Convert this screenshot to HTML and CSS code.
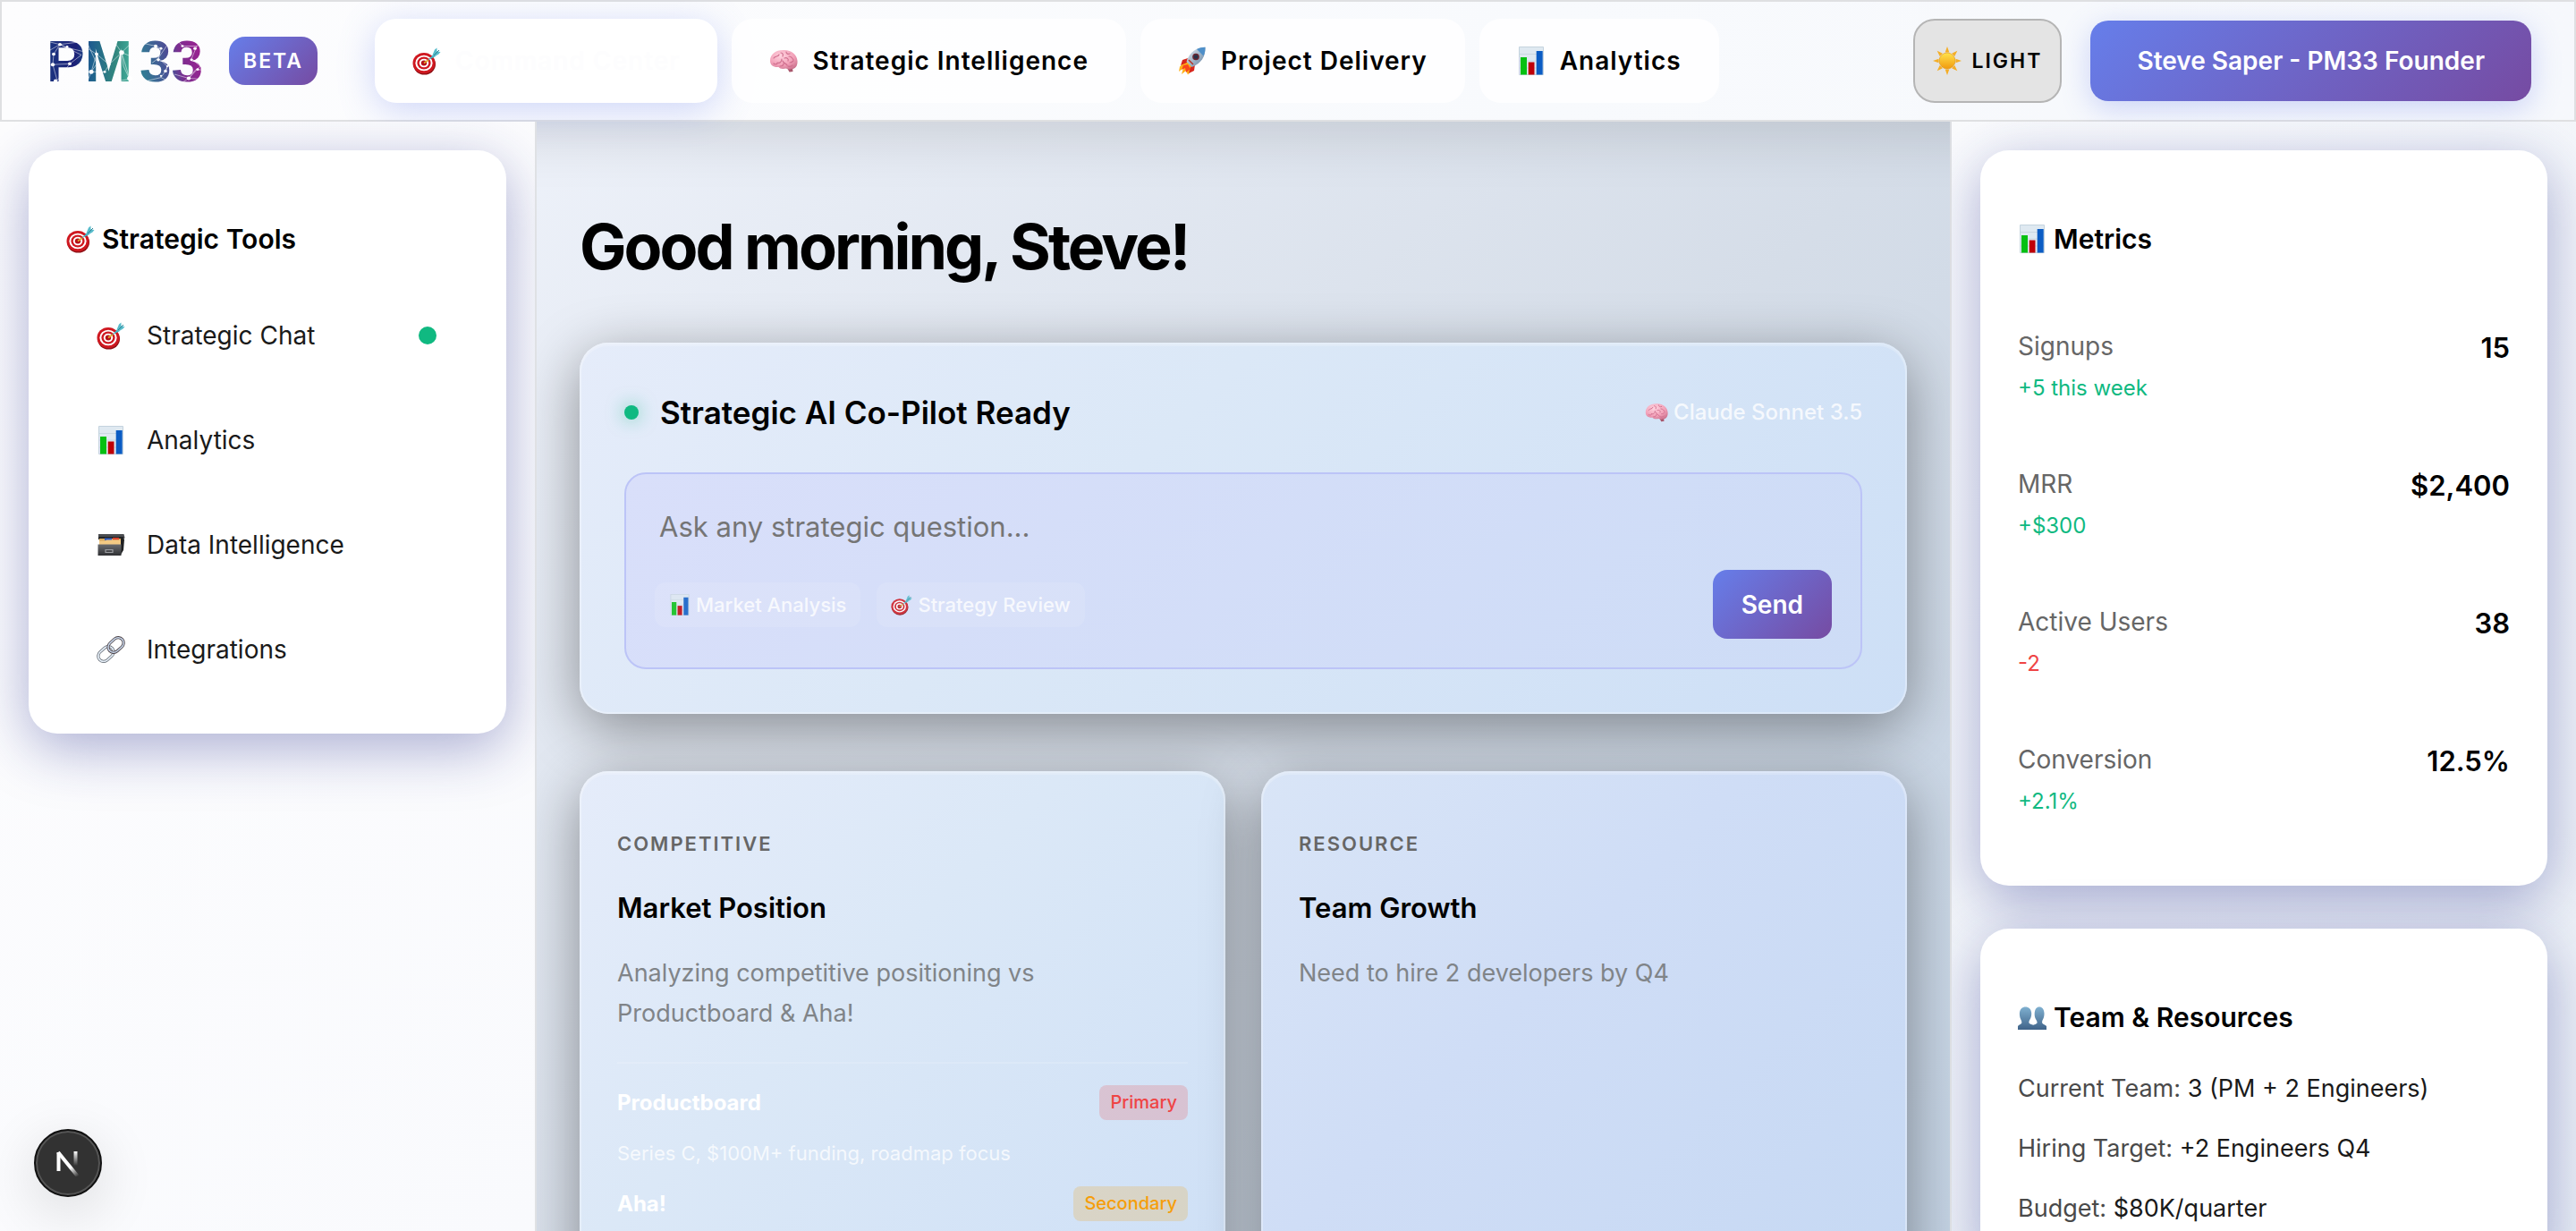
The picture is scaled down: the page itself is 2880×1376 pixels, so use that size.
FILE: index.html
```html
<!DOCTYPE html>
<html lang="en">
<head>
<meta charset="utf-8">
<meta name="viewport" content="width=device-width, initial-scale=1">
<title>PM33</title>
<link rel="stylesheet" href="styles.css">
</head>
<body>
<svg class="sprite" aria-hidden="true">
  <defs>
    <linearGradient id="g-steel" x1="0" y1="0" x2="0" y2="1"><stop offset="0" stop-color="#7fb0d0"/><stop offset="1" stop-color="#3f6389"/></linearGradient>
    <radialGradient id="g-brain" cx=".4" cy=".3" r=".8"><stop offset="0" stop-color="#ffd3df"/><stop offset=".6" stop-color="#f2a0b8"/><stop offset="1" stop-color="#c9708c"/></radialGradient>
    <linearGradient id="g-sun" x1="0" y1="0" x2="0" y2="1"><stop offset="0" stop-color="#ffe34d"/><stop offset="1" stop-color="#f19a0e"/></linearGradient>
    <linearGradient id="g-body" x1="0" y1="0" x2="1" y2="1"><stop offset="0" stop-color="#e6edf3"/><stop offset="1" stop-color="#5f7f9f"/></linearGradient>
    <linearGradient id="g-box" x1="0" y1="0" x2="0" y2="1"><stop offset="0" stop-color="#6a6c70"/><stop offset="1" stop-color="#2f3033"/></linearGradient>
    <linearGradient id="g-n1" gradientUnits="userSpaceOnUse" x1="18" y1="20" x2="26" y2="30"><stop offset="0" stop-color="#fff"/><stop offset="1" stop-color="#fff" stop-opacity="0"/></linearGradient>
    <linearGradient id="g-n2" gradientUnits="userSpaceOnUse" x1="0" y1="2" x2="0" y2="18"><stop offset="0" stop-color="#fff"/><stop offset="1" stop-color="#fff" stop-opacity="0"/></linearGradient>
  </defs>
  <symbol id="i-target" viewBox="0 0 32 32">
    <ellipse cx="13.500" cy="20" rx="12.500" ry="11.500" fill="#8f1116"/>
    <ellipse cx="13" cy="18.500" rx="12.500" ry="11.500" fill="#cf1820"/>
    <ellipse cx="13" cy="18.500" rx="9.600" ry="8.800" fill="#fff"/>
    <ellipse cx="13" cy="18.500" rx="7.600" ry="7" fill="#cf1820"/>
    <ellipse cx="13" cy="18.500" rx="5.200" ry="4.800" fill="#fff"/>
    <ellipse cx="13" cy="18.500" rx="3.200" ry="3" fill="#b5121a"/>
    <path d="M13 18.500 18 15" stroke="#e0a92e" stroke-width="1.600"/>
    <path d="M17 15.500 24 8.500 26 11Z" fill="#3fb6c6"/>
    <path d="M22.500 9.500 25 3.500 27.500 1.500 27.500 5.500 31.500 6 29.500 8.500 24.500 11.500Z" fill="#58bccb"/>
    <path d="M24 10 30 4" stroke="#2b7f90" stroke-width="1"/>
  </symbol>
  <symbol id="i-chart" viewBox="0 0 32 32">
    <path d="M2.500.5h27v31h-27z" fill="#dfe9f1" stroke="#c4d3de"/>
    <path d="M3 8.500h26M3 16h26M3 24h26" stroke="#cbd8e2"/>
    <path d="M4 12h7v19.500H4z" fill="#06c012"/><path d="M12.700 17.500h6.800v14h-6.800z" fill="#bf0008"/><path d="M21.700 5h7v26.500h-7z" fill="#0b5cc4"/>
  </symbol>
  <symbol id="i-brain" viewBox="0 0 32 32">
    <path d="M20 24 26 23.500 26.500 28 22.500 28.500Z" fill="#a8566c"/>
    <path d="M1 16C1 8 8 3.500 17 4c8 .3 14 5 14.500 12 .3 4-1 8-5 9-3 .8-6 .5-7.500-.5-4 1-7 .5-8.500-1.500C5 23.500 1 21 1 16Z" fill="url(#g-brain)"/>
    <path d="M5 13c2-3 5-1 6-4M9 18c3 1 5-1 5-4m-9 5c1 1 3 1 4 0m4-12c2 0 3 2 2 4m4-5c0 2 2 3 4 2m-6 5c3-1 5 1 4 3m1-5c3 0 4 2 5 4m-12 1c1 3 4 3 5 5m3-3c2 0 3-1 4-2M12 22c2 0 4-1 4-3m5 3c2 1 4 0 5-1" fill="none" stroke="#d0708f" stroke-width="1.200" stroke-linecap="round"/>
  </symbol>
  <symbol id="i-rocket" viewBox="0 0 32 32">
    <path d="M8 17 2 22.500 1 28 6 24 4 31 9 27 11 31.500 17 25 14 18Z" fill="#ffb017"/>
    <path d="M6 21 4 26 8 24 9 29 14 25 11 20Z" fill="#f9471d"/>
    <path d="M11 13 5 15 3 21 10 18ZM19 20 18 27 12 30 14 23Z" fill="#d8261c"/>
    <path d="M30.500.8C21 1 13 6 9.500 17l6 6C26 19 31 11 30.500.8Z" fill="url(#g-body)"/>
    <path d="M30.500.8C27 .8 24 1.500 21 3l7.500 7.500c1.500-3 2-6 2-9.700Z" fill="#4e8fc9"/>
    <circle cx="20" cy="11.500" r="3.800" fill="#6b2630"/><circle cx="20" cy="11.500" r="2.300" fill="#25324a"/>
    <path d="m12 15 5 5" stroke="#b73327" stroke-width="1.500"/>
  </symbol>
  <symbol id="i-cabinet" viewBox="0 0 32 32">
    <path d="M2 4h28.500l1 4-1.500 3V8H2z" fill="#4a4c50"/><path d="M2 7h28v3H2z" fill="#232426"/>
    <path d="M27 10h4l-1 12-3 5z" fill="#1f2022"/>
    <path d="M3 9h24v6H3z" fill="#d9aa5f"/><path d="M9 8.500h8V11H9z" fill="#315fc6"/><path d="M18 8h7v2.500h-7z" fill="#d8452e"/>
    <path d="M3 11.500h7l1-1h16V16H3z" fill="#f3ca84"/>
    <path d="M1.500 15.500h26v12.500h-26z" fill="url(#g-box)"/><path d="M10 21.500h8v3h-8z" fill="none" stroke="#9a9ca0" stroke-width="1.200"/>
  </symbol>
  <symbol id="i-link" viewBox="0 0 32 32">
    <g fill="none" transform="rotate(-42 16 16)">
      <rect x="-1" y="10" width="19" height="12" rx="6" stroke="#59606a" stroke-width="3.200"/><rect x="-1" y="10" width="19" height="12" rx="6" stroke="#e4edf6" stroke-width="1.800"/>
      <rect x="14" y="10" width="19" height="12" rx="6" stroke="#4b4146" stroke-width="3.200"/><rect x="14" y="10" width="19" height="12" rx="6" stroke="#c7d6ea" stroke-width="1.500"/>
    </g>
  </symbol>
  <symbol id="i-sun" viewBox="0 0 32 32">
    <path d="M16 0l2.300 6.500h-4.600zM16 32l2.300-6.500h-4.600zM0 16l6.500-2.300v4.600zM32 16l-6.500-2.300v4.600zM4.700 4.700l6.200 3-3.200 3.200zM27.300 4.700l-6.200 3 3.200 3.200zM4.700 27.300l6.200-3-3.200-3.200zM27.300 27.300l-6.200-3 3.200-3.200z" fill="#f4ae27"/>
    <circle cx="16" cy="16" r="9" fill="url(#g-sun)" stroke="#e3950f" stroke-width=".6"/>
  </symbol>
  <symbol id="i-people" viewBox="0 0 32 32">
    <path d="M15.500 30V26c1-1.500 5-1.800 6-3.500.3-1.500-.5-2.500-1.300-4-1.200-2-1.700-4.500-1.500-7C19 7 21 4.500 24 4.500s5.200 2.500 5.500 7c.1 2.500-.4 5-1.500 7-.8 1.500-1 2.500-.8 4 .8 1.500 3.500 2 4.800 3.500v4z" fill="url(#g-steel)"/>
    <path d="M0 30v-4c1-1.500 3.500-2 4.300-3.500.2-1.500-.3-2.500-1-4-1-2-1.500-4.500-1.400-7C2.200 7 5 4.500 8.500 4.500S15 7 15.200 11.500c.1 2.500-.5 5-1.700 7-.8 1.500-1.300 2.500-1 4 .8 1.700 6 2 7 3.500v4z" fill="url(#g-steel)"/>
  </symbol>
</svg>

<div class="app">
  <header class="topbar">
    <svg class="logo" viewBox="0 0 182 84" role="img" aria-label="PM 33">
      <defs>
        <linearGradient id="lg-pm" gradientUnits="userSpaceOnUse" x1="4" y1="20" x2="99" y2="26"><stop offset="0" stop-color="#1b3580"/><stop offset=".33" stop-color="#1c2077"/><stop offset=".5" stop-color="#1e5d8f"/><stop offset=".8" stop-color="#32877f"/><stop offset="1" stop-color="#43b09b"/></linearGradient>
        <linearGradient id="lg-33" gradientUnits="userSpaceOnUse" x1="108" y1="40" x2="178" y2="26"><stop offset="0" stop-color="#327a94"/><stop offset=".45" stop-color="#4f4a96"/><stop offset=".6" stop-color="#7c2f90"/><stop offset="1" stop-color="#a01f90"/></linearGradient>
      </defs>
      <text class="logo-text" x="2" y="65" fill="url(#lg-pm)">PM</text>
      <text class="logo-text" x="106" y="65" fill="url(#lg-33)">33</text>
      <g transform="translate(0 12) scale(1 .9)">
        <path fill="none" stroke="#fff" stroke-width=".7" opacity=".75" d="M6 10 17 13 41 26 28 37 9 38 10 25 17 13 25 17 44 22M9 38 14 58 28 37M6 20 17 13 38 10M47 10 60 41 58 25 48 18M52 47 58 25 72 38 86 23 96 12M52 47 48 58M52 47 67 47 72 38M86 23 95 56 88 40 86 23 78 10M86 23 97 28M95 56 84 58M52 47 60 34M112 12 124 15 130 18 127 30 137 40 135 46 130 54 115 58M127 30 138 12M135 46 142 30M150 10 154 15 170 15 164 31 169 34M164 31 174 40 161 55 145 50M161 55 169 44 178 45M161 55 154 60M170 15 178 10M127 30 120 36M130 54 137 58M161 55 174 56"/>
        <g fill="#fff"><circle cx="17" cy="13" r="2"/><circle cx="10" cy="25" r="2"/><circle cx="9" cy="38" r="2.200"/><circle cx="28" cy="37" r="2"/><circle cx="12" cy="58" r="2"/><circle cx="25" cy="16" r="1.500"/><circle cx="52" cy="47" r="2.600"/><circle cx="58" cy="25" r="2"/><circle cx="67" cy="47" r="1.500"/><circle cx="72" cy="38" r="1.500"/><circle cx="86" cy="23" r="2.800"/><circle cx="95" cy="55" r="2.800"/><circle cx="124" cy="15" r="2"/><circle cx="130" cy="18" r="1.500"/><circle cx="127" cy="32" r="1.800"/><circle cx="135" cy="46" r="1.800"/><circle cx="130" cy="52" r="1.200"/><circle cx="137" cy="40" r="1.200"/><circle cx="154" cy="15" r="1.500"/><circle cx="168" cy="18" r="1.800"/><circle cx="164" cy="32" r="1.500"/><circle cx="171" cy="44" r="1.500"/><circle cx="161" cy="55" r="2.200"/></g>
      </g>
    </svg>
    <span class="beta">BETA</span>
    <nav class="mainnav" aria-label="Main">
      <button class="nav-btn is-active" type="button"><svg class="emoji"><use href="#i-target"/></svg><span>Command Center</span></button>
      <button class="nav-btn" type="button"><svg class="emoji"><use href="#i-brain"/></svg><span>Strategic Intelligence</span></button>
      <button class="nav-btn" type="button"><svg class="emoji"><use href="#i-rocket"/></svg><span>Project Delivery</span></button>
      <button class="nav-btn" type="button"><svg class="emoji"><use href="#i-chart"/></svg><span>Analytics</span></button>
    </nav>
    <button class="theme-btn" type="button"><svg class="emoji"><use href="#i-sun"/></svg><span>LIGHT</span></button>
    <button class="user-btn" type="button">Steve Saper - PM33 Founder</button>
  </header>

  <div class="columns">
    <aside class="side side-left">
      <section class="panel">
        <h3 class="panel-title"><svg class="emoji"><use href="#i-target"/></svg>Strategic Tools</h3>
        <nav class="tools" aria-label="Strategic tools">
          <a class="tool" href="#chat"><svg class="emoji"><use href="#i-target"/></svg>Strategic Chat<span class="tool-dot"></span></a>
          <a class="tool" href="#analytics"><svg class="emoji"><use href="#i-chart"/></svg>Analytics</a>
          <a class="tool" href="#data"><svg class="emoji"><use href="#i-cabinet"/></svg>Data Intelligence</a>
          <a class="tool" href="#integrations"><svg class="emoji"><use href="#i-link"/></svg>Integrations</a>
        </nav>
      </section>
    </aside>

    <main class="center">
      <h1 class="greeting">Good morning, Steve!</h1>
      <section class="glass copilot">
        <div class="copilot-head">
          <span class="status-dot"></span>
          <h2 class="copilot-title">Strategic AI Co-Pilot Ready</h2>
          <span class="model"><svg class="emoji"><use href="#i-brain"/></svg>Claude Sonnet 3.5</span>
        </div>
        <form class="ask" action="#">
          <input class="ask-input" type="text" aria-label="Strategic question" placeholder="Ask any strategic question...">
          <div class="ask-row">
            <button class="chip" type="button"><svg class="emoji"><use href="#i-chart"/></svg>Market Analysis</button>
            <button class="chip" type="button"><svg class="emoji"><use href="#i-target"/></svg>Strategy Review</button>
            <button class="send" type="submit">Send</button>
          </div>
        </form>
      </section>
      <div class="cards">
        <article class="glass card card-market">
          <p class="eyebrow">COMPETITIVE</p>
          <h3 class="card-title">Market Position</h3>
          <p class="card-text">Analyzing competitive positioning vs Productboard &amp; Aha!</p>
          <div class="rivals">
            <div class="rival"><strong class="rival-name">Productboard</strong><span class="tag tag-red">Primary</span></div>
            <p class="rival-note">Series C, $100M+ funding, roadmap focus</p>
            <div class="rival"><strong class="rival-name">Aha!</strong><span class="tag tag-amber">Secondary</span></div>
          </div>
        </article>
        <article class="glass card card-team">
          <p class="eyebrow">RESOURCE</p>
          <h3 class="card-title">Team Growth</h3>
          <p class="card-text">Need to hire 2 developers by Q4</p>
        </article>
      </div>
    </main>

    <aside class="side side-right">
      <section class="panel">
        <h3 class="panel-title"><svg class="emoji"><use href="#i-chart"/></svg>Metrics</h3>
        <div class="metrics">
          <div class="metric"><div><div class="metric-name">Signups</div><div class="metric-change">+5 this week</div></div><div class="metric-value">15</div></div>
          <div class="metric"><div><div class="metric-name">MRR</div><div class="metric-change">+$300</div></div><div class="metric-value">$2,400</div></div>
          <div class="metric"><div><div class="metric-name">Active Users</div><div class="metric-change is-down">-2</div></div><div class="metric-value">38</div></div>
          <div class="metric"><div><div class="metric-name">Conversion</div><div class="metric-change">+2.1%</div></div><div class="metric-value">12.5%</div></div>
        </div>
      </section>
      <section class="panel">
        <h3 class="panel-title"><svg class="emoji"><use href="#i-people"/></svg>Team &amp; Resources</h3>
        <ul class="facts">
          <li>Current Team: <span>3 (PM + 2 Engineers)</span></li>
          <li>Hiring Target: <span>+2 Engineers Q4</span></li>
          <li>Budget: <span>$80K/quarter</span></li>
        </ul>
      </section>
    </aside>
  </div>
</div>

<button class="dev-badge" type="button" aria-label="Open developer tools">
  <svg viewBox="0 0 30 30" fill="none"><path d="M4.500 24V3" stroke="#fff" stroke-width="4"/><path d="M4 3 26 30" stroke="url(#g-n1)" stroke-width="4"/><path d="M23.500 2v16" stroke="url(#g-n2)" stroke-width="4"/></svg>
</button>
</body>
</html>
```

FILE: styles.css
```css
* { box-sizing: border-box; }

body {
  margin: 0;
  font-family: Inter, "Noto Sans", "Liberation Sans", sans-serif;
  font-size: 28px;
  color: #000;
  background: linear-gradient(135deg, #f4f7fc, #c2d2e4);
}

button, input { font: inherit; color: inherit; border: 0; background: none; }
button { cursor: pointer; white-space: nowrap; }
h1, h2, h3, p, ul { margin: 0; padding: 0; }

.sprite { position: absolute; width: 0; height: 0; }
.emoji { width: 32px; height: 32px; flex: none; }

.app {
  display: flex;
  flex-direction: column;
  height: 100vh;
}

/* Top bar */
.topbar {
  position: relative;
  z-index: 1;
  display: flex;
  align-items: center;
  min-height: 136px;
  padding: 0 48px;
  border: 2px solid #dfe0e2;
  background: linear-gradient(90deg, #fdfdfe, #f8fafd 60%, #f6f8fc);
  box-shadow: 0 16px 64px rgba(0, 0, 0, .12);
}
.logo { width: 182px; height: 84px; flex: none; }
.logo-text { font: bold 64px "Liberation Sans", sans-serif; }
.beta {
  margin-left: 24px;
  padding: 0 16px;
  border-radius: 18px;
  font-size: 23px;
  font-weight: 600;
  line-height: 54px;
  letter-spacing: 2px;
  color: #fff;
  background: linear-gradient(135deg, #667eea, #764ba2);
}
.mainnav { display: flex; gap: 16px; margin-left: 64px; }
.nav-btn {
  display: flex;
  align-items: center;
  gap: 16px;
  height: 94px;
  padding: 0 42px;
  border-radius: 24px;
  font-size: 28px;
  font-weight: 600;
  letter-spacing: 1px;
  background: rgba(255, 255, 255, .8);
}
.nav-btn.is-active {
  color: #fdfdfe;
  background: #fff;
  box-shadow: 0 8px 40px rgba(102, 126, 234, .3);
}
.theme-btn {
  display: flex;
  align-items: center;
  gap: 12px;
  height: 94px;
  margin-left: auto;
  padding: 0 20px;
  border: 2px solid #b5b5b5;
  border-radius: 24px;
  font-size: 23px;
  font-weight: 600;
  letter-spacing: 2px;
  background: #e4e4e4;
}
.user-btn {
  height: 90px;
  margin-left: 32px;
  padding: 0 52px;
  border-radius: 20px;
  font-weight: 600;
  font-size: 28px;
  color: #fff;
  background: linear-gradient(135deg, #667eea, #764ba2);
  box-shadow: 0 8px 32px rgba(102, 126, 234, .3);
}

/* Columns */
.columns {
  flex: 1;
  min-height: 0;
  display: grid;
  grid-template-columns: 600px minmax(0, 1fr) 700px;
}
.side, .center { overflow-y: auto; scrollbar-width: none; }
.side {
  position: relative;
  z-index: 2;
  display: flex;
  flex-direction: column;
  gap: 48px;
  padding: 32px;
}
.side-left { border-right: 2px solid #dfe1e4; background: linear-gradient(135deg, #fdfdfe, #f9fafd); }
.side-right { border-left: 2px solid #dcdee2; background: linear-gradient(135deg, #fafbfd, #eaeff6); }

.panel {
  flex: none;
  padding: 42px 42px 44px;
  border-radius: 32px;
  background: #fff;
  box-shadow: 0 16px 64px rgba(31, 38, 135, .37);
}
.panel-title {
  display: flex;
  align-items: center;
  gap: 8px;
  margin: 38px 0;
  font-size: 30px;
  font-weight: 600;
  line-height: 38px;
}

.tools { display: flex; flex-direction: column; gap: 16px; }
.tool {
  display: flex;
  align-items: center;
  gap: 24px;
  height: 101px;
  padding: 0 36px 0 34px;
  font-size: 28px;
  color: #1a1a1a;
  text-decoration: none;
}
.tool-dot {
  width: 20px;
  height: 20px;
  margin-left: auto;
  border-radius: 50%;
  background: #10b981;
}

.metrics { padding-top: 6px; }
.metric {
  display: flex;
  justify-content: space-between;
  padding: 34px 0;
}
.metric-name { font-size: 28px; line-height: 46px; color: #666; }
.metric-change { margin-top: 8px; font-size: 24px; line-height: 32px; color: #10b981; }
.metric-change.is-down { color: #ef4444; }
.metric-value { font-size: 31px; font-weight: 600; line-height: 50px; }

.facts { list-style: none; display: flex; flex-direction: column; gap: 22px; }
.facts li { font-size: 27px; line-height: 45px; color: #4a4a4a; }
.facts span { color: #1a1a1a; }

/* Center */
.center {
  padding: 48px;
  background: linear-gradient(135deg, #edf1f9, #d5dde8 55%, #c3d2e3);
}
.greeting {
  margin: 46px 0 62px;
  font-size: 70px;
  font-weight: 700;
  line-height: 91px;
  letter-spacing: -3px;
}
.glass {
  border: 2px solid rgba(255, 255, 255, .3);
  border-radius: 32px;
  background: linear-gradient(135deg, #e5ecfa, #dbe8f7 40%, #cddff6) border-box;
  box-shadow: 0 16px 64px rgba(0, 0, 0, .4), inset 0 2px 0 rgba(255, 255, 255, .2);
}
.copilot { padding: 48px; }
.copilot-head { display: flex; align-items: center; height: 55px; }
.status-dot {
  width: 16px;
  height: 16px;
  border-radius: 50%;
  background: #10b981;
  box-shadow: 0 0 20px rgba(16, 185, 129, .6);
}
.copilot-title { margin-left: 24px; font-size: 35px; font-weight: 600; }
.model {
  display: flex;
  align-items: center;
  gap: 6px;
  margin-left: auto;
  font-size: 24px;
  font-weight: 500;
  color: rgba(255, 255, 255, .8);
}
.model .emoji { width: 26px; height: 26px; }

.ask {
  margin-top: 40px;
  padding: 28px 32px 32px;
  border: 2px solid #bcc4f7;
  border-radius: 24px;
  background: linear-gradient(135deg, #d9dffa, #cddcf6);
}
.ask-input {
  display: block;
  width: 100%;
  height: 60px;
  padding: 0 5px;
  font-size: 31px;
  outline: 0;
}
.ask-input::placeholder { color: #757575; opacity: 1; }
.ask-row { display: flex; align-items: center; gap: 18px; margin-top: 19px; }
.chip {
  display: flex;
  align-items: center;
  gap: 6px;
  height: 50px;
  padding: 0 16px;
  border-radius: 12px;
  font-size: 22px;
  font-weight: 500;
  color: rgba(255, 255, 255, .8);
  background: rgba(255, 255, 255, .1);
}
.chip .emoji { width: 24px; height: 24px; opacity: .85; }
.send {
  height: 77px;
  margin-left: auto;
  padding: 0 32px;
  border-radius: 16px;
  font-weight: 600;
  color: #fff;
  background: linear-gradient(135deg, #667eea, #764ba2);
}

.cards { display: grid; grid-template-columns: 1fr 1fr; gap: 40px; margin-top: 64px; }
.card { min-height: 640px; padding: 60px 40px 40px; }
.card-team { background: linear-gradient(135deg, #d9e5f7, #cfddf6 40%, #c5d8f3) border-box; }
.eyebrow { font-size: 22px; font-weight: 600; line-height: 38px; letter-spacing: 2px; color: #666; }
.card-title { margin-top: 34px; font-size: 31px; font-weight: 600; line-height: 38px; }
.card-text { margin-top: 31px; font-size: 27px; line-height: 45px; color: #808488; }
.rivals { margin-top: 32px; padding-top: 24px; border-top: 2px solid rgba(255, 255, 255, .15); }
.rival { display: flex; align-items: center; justify-content: space-between; }
.rival-name { font-size: 24px; font-weight: 700; color: #fff; }
.rival-note { margin: 18px 0; font-size: 22px; line-height: 38px; color: rgba(255, 255, 255, .75); }
.tag { padding: 0 12px; border-radius: 8px; font-size: 20px; font-weight: 500; line-height: 39px; }
.tag-red { color: #ef4444; background: rgba(239, 68, 68, .2); }
.tag-amber { color: #f59e0b; background: rgba(245, 158, 11, .2); }

/* Floating badge */
.dev-badge {
  position: fixed;
  z-index: 3;
  left: 38px;
  bottom: 38px;
  display: flex;
  align-items: center;
  justify-content: center;
  width: 76px;
  height: 76px;
  padding: 0;
  border: 2px solid #111;
  border-radius: 50%;
  background: #323232;
  box-shadow: inset 0 0 0 2px #555, 0 16px 64px rgba(0, 0, 0, .14);
}
.dev-badge svg { width: 30px; height: 30px; }
```
